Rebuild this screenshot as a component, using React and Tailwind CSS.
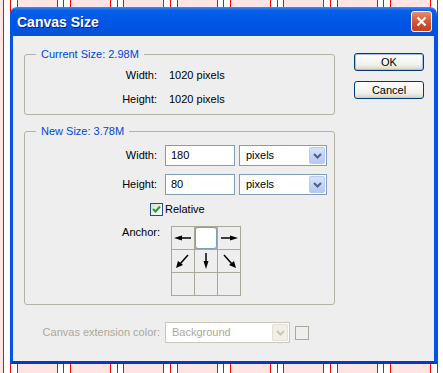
const groups = Array.from({ length: 9 }, (_, k) => 10 / 3 + (k * 160) / 3);

const Chevron = ({ color }) => (
    <svg width="9" height="6" viewBox="0 0 9 6">
        <path d="M1 1 L4.5 4.5 L8 1" fill="none" stroke={color} strokeWidth="2" />
    </svg>
);

const Combo = ({ value, width, disabled }) => (
    <div
        className={`flex h-[21px] items-stretch border p-[1px] ${width} ${
            disabled ? 'border-[#c9c7ba] bg-white text-[#aca899]' : 'border-[#7f9db9] bg-white text-black'
        }`}
    >
        <div className="flex flex-1 items-center pl-[5px]">{value}</div>
        <div
            className={`flex w-[16px] items-center justify-center rounded-[2px] border ${
                disabled
                    ? 'border-[#e3e1d6] bg-[#f1efe6]'
                    : 'border-[#b9c9ef] bg-[linear-gradient(180deg,#d6e2fd,#b4c8f6)]'
            }`}
        >
            <Chevron color={disabled ? '#c9c7ba' : '#4d6185'} />
        </div>
    </div>
);

// one arrow per anchor cell, cells are 22x22
const arrows = {
    0: (
        <>
            <line x1="8" y1="11" x2="19" y2="11" stroke="#000" strokeWidth="1.5" />
            <polygon points="2,11 10,8.5 10,13.5" fill="#000" />
        </>
    ),
    2: (
        <>
            <line x1="3" y1="11" x2="14" y2="11" stroke="#000" strokeWidth="1.5" />
            <polygon points="20,11 12,8.5 12,13.5" fill="#000" />
        </>
    ),
    3: (
        <>
            <line x1="16" y1="5" x2="8" y2="14" stroke="#000" strokeWidth="1.5" />
            <polygon points="4,18 6,11 11,15" fill="#000" />
        </>
    ),
    4: (
        <>
            <line x1="11" y1="3" x2="11" y2="13" stroke="#000" strokeWidth="1.5" />
            <polygon points="11,19 8.5,11 13.5,11" fill="#000" />
        </>
    ),
    5: (
        <>
            <line x1="6" y1="5" x2="14" y2="14" stroke="#000" strokeWidth="1.5" />
            <polygon points="18,18 16,11 11,15" fill="#000" />
        </>
    ),
};

const GroupBox = ({ title, className, children }) => (
    <div className={`relative w-[311px] rounded-[3px] border border-[#b5b2a3] ${className}`}>
        <span className="absolute left-[11px] top-[-7px] bg-[#eeeeee] px-[5px] leading-[13px] text-[#0046d5]">
            {title}
        </span>
        {children}
    </div>
);

export default function App() {
    return (
        <div className="relative h-[373px] w-[443px] overflow-hidden bg-[#ffe4e4] font-['Liberation_Sans',Arial,sans-serif] text-[11px] text-black">
            {/* guide lines behind the dialog */}
            <div className="absolute inset-0">
                {groups.map((g) => (
                    <div key={g}>
                        <div className="absolute top-0 h-full bg-white" style={{ left: Math.round(g), width: Math.round(g + 40 / 3) - Math.round(g) }} />
                        {[0, 1, 2].map((i) => (
                            <div key={i} className="absolute top-0 h-full w-px bg-[#ff0000]" style={{ left: Math.round(g + (i * 20) / 3) }} />
                        ))}
                    </div>
                ))}
            </div>

            <div className="relative pl-[10px] pt-[7px]">
                <div className="w-[427px]">
                    {/* Title bar */}
                    <div className="flex h-[29px] items-center justify-between rounded-t-[7px] bg-[linear-gradient(180deg,#3f8cf3_0%,#0a5fe9_12%,#0058e6_45%,#0053e0_80%,#0a4fd4_100%)] pl-[7px] pr-[5px]">
                        <span className="text-[14px] font-bold leading-none text-white [text-shadow:1px_1px_0_#0b1c8c]">Canvas Size</span>
                        <div className="flex h-[21px] w-[21px] items-center justify-center rounded-[3px] border border-white bg-[linear-gradient(180deg,#e98a6a,#d0502c_60%,#c2401c)]">
                            <svg width="11" height="11" viewBox="0 0 11 11">
                                <path d="M1.5 1.5 L9.5 9.5 M9.5 1.5 L1.5 9.5" stroke="#fff" strokeWidth="2.2" />
                            </svg>
                        </div>
                    </div>

                    {/* Body */}
                    <div className="flex h-[328px] border-x-[3px] border-b-[3px] border-x-[#0553e3] border-b-[#0739c8] bg-[#eeeeee]">
                        <div className="ml-[11px] flex flex-col pt-[18px]">
                            <GroupBox title="Current Size: 2.98M" className="h-[61px]">
                                <div className="flex flex-col gap-[11px] pt-[14px] leading-[13px]">
                                    <div className="flex">
                                        <span className="w-[132px] text-right">Width:</span>
                                        <span className="ml-[12px]">1020 pixels</span>
                                    </div>
                                    <div className="flex">
                                        <span className="w-[132px] text-right">Height:</span>
                                        <span className="ml-[12px]">1020 pixels</span>
                                    </div>
                                </div>
                            </GroupBox>

                            <GroupBox title="New Size: 3.78M" className="mt-[16px] h-[174px]">
                                <div className="flex flex-col pt-[13px]">
                                    {[
                                        ['Width:', '180'],
                                        ['Height:', '80'],
                                    ].map(([label, val], idx) => (
                                        <div key={label} className={`flex h-[21px] items-center ${idx ? 'mt-[8px]' : ''}`}>
                                            <span className="w-[132px] text-right">{label}</span>
                                            <div className="ml-[8px] flex h-[21px] w-[70px] items-center border border-[#7f9db9] bg-white pl-[5px]">{val}</div>
                                            <div className="ml-[4px]">
                                                <Combo value="pixels" width="w-[88px]" />
                                            </div>
                                        </div>
                                    ))}

                                    <div className="mt-[8px] flex h-[13px] items-center">
                                        <div className="ml-[125px] flex h-[13px] w-[13px] items-center justify-center border border-[#1c5180] bg-[linear-gradient(135deg,#dcdcd7,#ffffff)]">
                                            <svg width="9" height="9" viewBox="0 0 9 9">
                                                <path d="M1 4 L3.5 6.5 L8 1.5" fill="none" stroke="#21a121" strokeWidth="2" />
                                            </svg>
                                        </div>
                                        <span className="ml-[2px]">Relative</span>
                                    </div>

                                    <div className="mt-[10px] flex">
                                        <span className="w-[135px] text-right leading-[13px]">Anchor:</span>
                                        <div className="ml-[11px] grid grid-cols-[22px_22px_22px] grid-rows-[22px_22px_22px] gap-px border border-[#aca899] bg-[#aca899]">
                                            {Array.from({ length: 9 }, (_, i) => (
                                                <div key={i} className={i === 1 ? 'rounded-[3px] border border-[#7f9db9] bg-white' : 'bg-[#eeeeee]'}>
                                                    {arrows[i] && (
                                                        <svg width="22" height="22" viewBox="0 0 22 22">
                                                            {arrows[i]}
                                                        </svg>
                                                    )}
                                                </div>
                                            ))}
                                        </div>
                                    </div>
                                </div>
                            </GroupBox>

                            <div className="mt-[17px] flex h-[21px] items-center">
                                <span className="w-[136px] text-right text-[#aca899]">Canvas extension color:</span>
                                <div className="ml-[5px]">
                                    <Combo value="Background" width="w-[125px]" disabled />
                                </div>
                                <div className="ml-[5px] h-[14px] w-[14px] border border-[#aca899]" />
                            </div>
                        </div>

                        <div className="ml-[19px] flex flex-col pt-[17px]">
                            <button className="flex h-[18px] w-[70px] items-center justify-center rounded-[3px] border border-[#003c74] bg-[linear-gradient(180deg,#ffffff,#f0f0ea_70%,#d6d0c5)] shadow-[inset_0_0_0_1px_#a9c0ee]">
                                OK
                            </button>
                            <button className="mt-[10px] flex h-[18px] w-[70px] items-center justify-center rounded-[3px] border border-[#003c74] bg-[linear-gradient(180deg,#ffffff,#f0f0ea_70%,#d6d0c5)]">
                                Cancel
                            </button>
                        </div>
                    </div>
                </div>
            </div>
        </div>
    );
}
